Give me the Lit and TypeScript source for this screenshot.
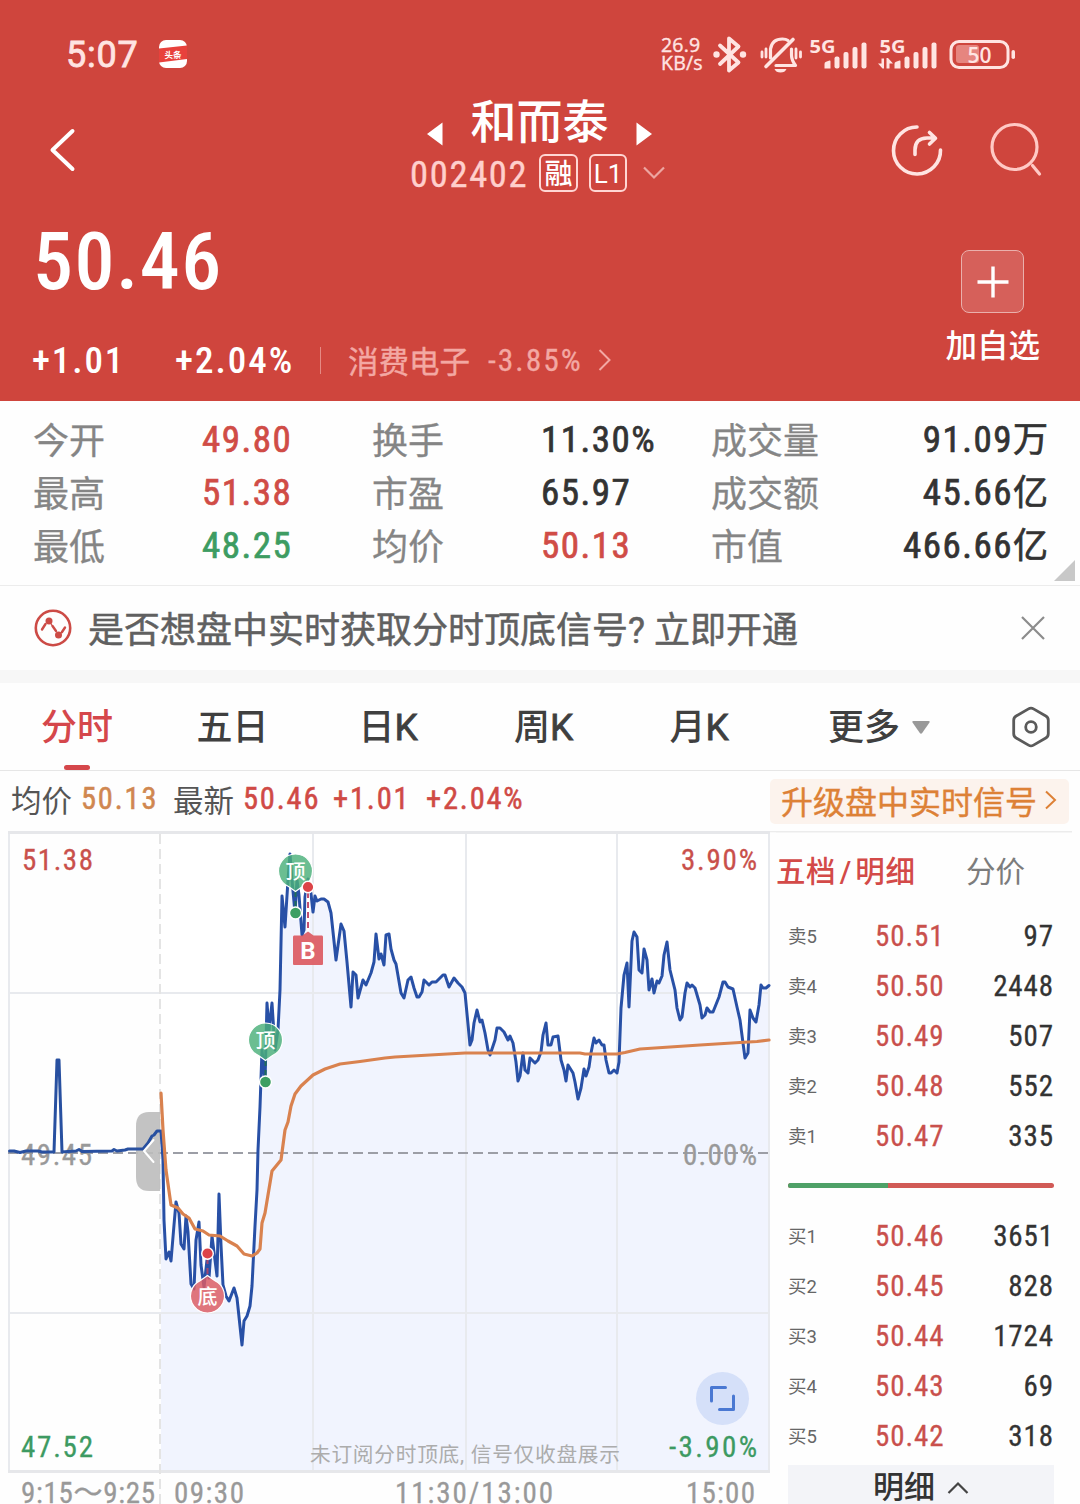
import { LitElement, html, svg, css } from "lit";
import { customElement, property } from "lit/decorators.js";

type Point = [number, number];

const CALL_AUCTION: Point[] = [
  [9.5, 1151], [14, 1151], [20, 1152.5], [26, 1151], [38, 1151], [42, 1152], [54, 1152], [57, 1060], [59, 1060], [62, 1152],
  [68, 1151.5], [76, 1151], [79, 1149.5], [82, 1151.5], [112, 1151], [114, 1149.5], [117, 1151], [125, 1150], [128, 1149],
  [143, 1149], [148, 1143], [152, 1136], [154, 1135], [157, 1131], [160, 1131],
];

const PRICE: Point[] = [
  [161, 1131], [163, 1160], [164, 1220], [166, 1259], [169, 1252], [171, 1261], [174, 1225], [176, 1202], [179, 1213],
  [181, 1244], [184, 1249], [186, 1216], [188, 1232], [191, 1284], [194, 1289], [196, 1240], [199, 1222], [201, 1265],
  [204, 1287], [207, 1260], [209, 1278], [212, 1236], [217, 1276], [219, 1194], [221, 1245], [223, 1285], [226, 1296],
  [229, 1301], [234, 1288], [237, 1298], [242, 1345], [244, 1321], [247, 1316], [250, 1306], [252, 1286], [255, 1226],
  [257, 1190], [258, 1150], [260, 1107], [262, 1050], [265, 1082], [267, 1003], [269, 1030], [272, 1003], [275, 1050],
  [278, 1030], [280, 990], [282, 896], [285, 927], [288, 880], [290, 854], [292, 880], [295, 913], [297, 880], [299, 895],
  [302, 935], [304, 930], [305, 897], [308, 879], [311, 894], [313, 912], [315, 896], [317, 901], [321, 899], [324, 899],
  [328, 902], [331, 913], [336, 960], [341, 924], [344, 931], [347, 962], [351, 1007], [353, 972], [356, 975], [358, 998],
  [363, 980], [366, 985], [371, 973], [374, 962], [376, 934], [379, 959], [381, 954], [384, 965], [386, 935], [389, 934],
  [391, 949], [394, 960], [396, 964], [401, 993], [404, 998], [408, 980], [411, 977], [414, 988], [417, 997], [419, 997],
  [422, 992], [424, 980], [429, 985], [432, 982], [436, 982], [440, 978], [443, 975], [445, 975], [449, 987], [454, 978],
  [458, 983], [462, 987], [465, 993], [470, 1045], [472, 1040], [474, 1023], [477, 1010], [480, 1022], [482, 1020],
  [485, 1033], [488, 1050], [490, 1055], [493, 1046], [495, 1040], [497, 1028], [500, 1028], [504, 1032], [508, 1040],
  [510, 1036], [513, 1043], [516, 1062], [518, 1081], [520, 1076], [523, 1053], [525, 1070], [528, 1073], [530, 1058],
  [535, 1063], [538, 1060], [541, 1052], [543, 1035], [546, 1023], [548, 1045], [551, 1045], [553, 1037], [558, 1036],
  [561, 1060], [564, 1070], [566, 1081], [568, 1065], [573, 1073], [575, 1082], [578, 1099], [581, 1088], [584, 1069],
  [586, 1076], [589, 1067], [591, 1053], [594, 1038], [596, 1043], [599, 1040], [602, 1045], [604, 1045], [606, 1060],
  [609, 1073], [611, 1073], [614, 1070], [617, 1073], [619, 1062], [621, 1008], [624, 975], [627, 963], [629, 1007],
  [632, 941], [634, 932], [637, 937], [639, 970], [642, 973], [644, 949], [647, 960], [649, 990], [652, 979], [654, 993],
  [657, 981], [659, 983], [662, 976], [664, 955], [667, 942], [670, 970], [675, 990], [677, 1008], [680, 1020],
  [682, 1017], [685, 993], [687, 983], [690, 987], [692, 985], [695, 988], [700, 1005], [702, 1018], [705, 1015],
  [707, 1008], [710, 1012], [713, 1012], [719, 997], [723, 982], [725, 982], [728, 987], [733, 989], [737, 1007],
  [740, 1020], [743, 1043], [745, 1058], [748, 1053], [750, 1010], [753, 1018], [756, 1022], [759, 1005], [761, 985],
  [763, 988], [766, 988], [769, 985.5],
];

const AVERAGE: Point[] = [
  [161, 1093], [163, 1130], [166, 1170], [171, 1205], [178, 1208], [183, 1214], [189, 1218], [195, 1229], [203, 1231],
  [209, 1235], [220, 1236], [228, 1241], [237, 1246], [244, 1254], [252, 1256], [257, 1253], [260, 1249], [262, 1223],
  [265, 1213], [272, 1171], [281, 1160], [285, 1130], [288, 1122], [291, 1106], [295, 1094], [301, 1086], [313, 1075],
  [325, 1069], [340, 1064], [360, 1061.5], [385, 1058], [395, 1057], [430, 1055], [465, 1053], [580, 1053], [585, 1054],
  [617, 1054], [625, 1052.5], [640, 1049], [670, 1047], [700, 1045], [740, 1042.5], [757, 1041.5], [769, 1040],
];

const join = (points: Point[]) => points.map((p) => p.join(",")).join(" ");

const FONT = css`
  :host {
    font-family: Roboto, "Noto Sans CJK SC", sans-serif;
    font-weight: 500;
  }
  svg {
    display: block;
    flex: none;
  }
`;

const signalBars = svg`
  <path d="M0 26 v-4.500 q0 -1.600 1.600 -2.200 l3.400 -1.200 q1 -.3 1 .8 V26z"/>
  <rect x="10" y="14" width="5" height="12" rx="2"/>
  <rect x="19" y="9.500" width="5" height="16.500" rx="2"/>
  <rect x="28" y="4.500" width="5" height="21.500" rx="2"/>
  <rect x="37" y="0" width="5" height="26" rx="2"/>`;

@customElement("status-bar")
class StatusBar extends LitElement {
  static styles = [
    FONT,
    css`
      :host {
        display: flex;
        align-items: center;
        height: 78px;
        padding: 29px 13px 0 66px;
        box-sizing: border-box;
        color: #ffe4e2;
      }
      .time {
        font-size: 36px;
        line-height: 50px;
        letter-spacing: 0.8px;
        font-weight: 400;
        -webkit-text-stroke: 0.8px #ffe4e2;
        width: 93px;
        padding-top: 2px;
      }
      .grow {
        flex: 1;
      }
      .speed {
        font: 500 19.500px/18px "Open Sans", "Noto Sans", sans-serif;
        -webkit-text-stroke: 0.4px #ffe4e2;
        width: 51px;
        letter-spacing: 0.2px;
      }
      .icons {
        display: flex;
        align-items: center;
      }
    `,
  ];

  render() {
    const c = "#ffe4e2";
    return html`
      <span class="time">5:07</span>
      <svg width="28" height="28" viewBox="0 0 28 28">
        <rect width="28" height="28" rx="7" fill="#fff" />
        <path d="M0 8.500 L28 5.500 V19 L0 22.500z" fill="#e8413c" />
        <text x="14" y="17.500" font-size="8.500" font-weight="700" fill="#fff" text-anchor="middle">头条</text>
      </svg>
      <span class="grow"></span>
      <div class="icons">
        <span class="speed">26.9<br />KB/s</span>
        <svg width="355" height="40" viewBox="712 33 355 40">
          <g fill="none" stroke="${c}" stroke-width="3.800" stroke-linejoin="round" stroke-linecap="round">
            <path d="M720 44.500 L738.500 61.500 L729 69.500 V37.500 L738.500 45.500 L720 63" />
          </g>
          <circle cx="716.500" cy="53.500" r="3.200" fill="${c}" />
          <circle cx="743" cy="53.500" r="3.200" fill="${c}" />
          <g fill="none" stroke="${c}" stroke-width="3.200" stroke-linecap="round" stroke-linejoin="round">
            <path d="M770.500 57 V48 q1.500 -10 12 -10 q3.500 0 5.500 1.500" />
            <path d="M793 38.500 L766 65.500" stroke-width="3.600" />
            <path d="M791.500 48 V54 q0 5 4 10.500 H776" />
            <path d="M762 51 v5 M766 48 v8 M800.500 51 v5 M796 48 v9" stroke-width="2.800" />
          </g>
          <path d="M774.500 68 h12 q-1.500 3.500 -6 3.500 q-4.500 0 -6 -3.500z" fill="${c}" />
          <g font-family="Open Sans, sans-serif" font-size="18.500" font-weight="700" fill="${c}">
            <text x="809.500" y="51.500" textLength="26" lengthAdjust="spacingAndGlyphs">5G</text>
            <text x="879.500" y="51.500" textLength="26" lengthAdjust="spacingAndGlyphs">5G</text>
          </g>
          <g fill="${c}" transform="translate(824.500 41.500)">${signalBars}</g>
          <g fill="${c}" transform="translate(894.500 41.500)">${signalBars}</g>
          <path d="M878 62.500 h3.500 v-5 h2.500 v10 h-1.500z M886.500 57 h1.500 l5 5.500 h-3.500 v5 h-3z" fill="${c}" />
          <rect x="951" y="40.500" width="57" height="26" rx="8" fill="none" stroke="${c}" stroke-width="3" />
          <rect x="956" y="44" width="23" height="18" rx="3" fill="#e6857f" />
          <rect x="1011.500" y="49" width="3.500" height="9" rx="1.750" fill="${c}" />
          <text x="979.500" y="62" font-size="21" font-weight="600" text-anchor="middle" fill="${c}" font-family="Open Sans, sans-serif">50</text>
        </svg>
      </div>
    `;
  }
}

@customElement("quote-header")
class QuoteHeader extends LitElement {
  static styles = [
    FONT,
    css`
      :host {
        display: block;
        height: 323px;
        color: #fff;
      }
      .nav {
        display: flex;
        height: 132px;
      }
      .back {
        margin: 50px 0 0 49px;
      }
      .title {
        width: 262px;
        margin-left: 333px;
      }
      .name-row {
        display: flex;
        align-items: center;
        justify-content: space-between;
        width: 225px;
        margin-left: 17px;
        height: 84px;
      }
      .name-row svg {
        margin-top: 28px;
      }
      .name {
        font-size: 46px;
        line-height: 60px;
        padding-top: 4px;
      }
      .code-row {
        display: flex;
        align-items: center;
        height: 38px;
        margin-top: -8px;
        color: #ffcfcc;
      }
      .code {
        font-size: 36.500px;
        font-weight: 400;
        font-stretch: 85%;
        width: 129px;
        padding-top: 2px;
        letter-spacing: 1.7px;
        -webkit-text-stroke: 0.4px #ffcfcc;
      }
      .tag {
        box-sizing: border-box;
        height: 38px;
        width: 39px;
        border: 2px solid #ffd6d3;
        border-radius: 6px;
        color: #fff;
        font-size: 28px;
        line-height: 38px;
        text-align: center;
        margin-right: 11px;
      }
      .level {
        width: 38px;
        font-size: 26px;
        font-weight: 400;
        line-height: 36px;
        margin-right: 16px;
      }
      .share {
        margin: 45px 0 0 218px;
      }
      .search {
        margin: 43px 0 0 44px;
      }
      .body {
        display: flex;
        justify-content: space-between;
      }
      .price {
        font-size: 80px;
        line-height: 100px;
        padding: 2px 0 0 33px;
        font-stretch: 85%;
        letter-spacing: 1.5px;
      }
      .change-row {
        display: flex;
        align-items: center;
        height: 50px;
        margin: 23px 0 0 32px;
        font-size: 37px;
        font-stretch: 85%;
      }
      .delta {
        width: 143px;
        letter-spacing: 1.9px;
      }
      .pct {
        width: 145px;
        letter-spacing: 2px;
      }
      .rule {
        width: 1px;
        height: 27px;
        background: #e58a84;
        margin-right: 27px;
      }
      .sector {
        font-size: 30.500px;
        font-weight: 400;
        color: #f3a8a3;
        width: 140px;
        white-space: nowrap;
        -webkit-text-stroke: 0.4px #f3a8a3;
      }
      .sector-pct {
        font-size: 31.500px;
        font-weight: 400;
        color: #f3a8a3;
        width: 110px;
        letter-spacing: 2px;
        -webkit-text-stroke: 0.3px #f3a8a3;
      }
      .watch {
        display: flex;
        flex-direction: column;
        align-items: center;
        padding: 40px 40px 0 0;
        font-size: 31.500px;
        line-height: 40px;
      }
      .plus {
        box-sizing: border-box;
        width: 63px;
        height: 63px;
        border: 1.500px solid #eab0ac;
        border-radius: 8px;
        background: #d6605a;
        margin-bottom: 14px;
        display: flex;
        align-items: center;
        justify-content: center;
      }
    `,
  ];

  render() {
    return html`
      <div class="nav">
        <svg class="back" width="28" height="44" viewBox="0 0 28 44">
          <path d="M23.500 3 L3.500 22 L23.500 41" fill="none" stroke="#fff" stroke-width="4" stroke-linecap="round" stroke-linejoin="round" />
        </svg>
        <div class="title">
          <div class="name-row">
            <svg width="16" height="24" viewBox="0 0 16 24"><path d="M15.500 .5 V23.500 L0 12z" fill="#fff" /></svg>
            <span class="name">和而泰</span>
            <svg width="16" height="24" viewBox="0 0 16 24"><path d="M.5 .5 V23.500 L16 12z" fill="#fff" /></svg>
          </div>
          <div class="code-row">
            <span class="code">002402</span>
            <span class="tag">融</span>
            <span class="tag level">L1</span>
            <svg width="22" height="14" viewBox="0 0 22 14">
              <path d="M1 1.500 L11 11.500 L21 1.500" fill="none" stroke="#eda6a1" stroke-width="2.200" />
            </svg>
          </div>
        </div>
        <svg class="share" width="54" height="54" viewBox="0 0 54 54">
          <g fill="none" stroke="#ffe4e2" stroke-width="3.600" stroke-linecap="round" stroke-linejoin="round">
            <path d="M27 4 A23.500 23.500 0 1 0 50.500 27" />
            <path d="M25 31.500 V27 Q25 15 37 15 H45 M39.500 9.500 L45.500 15.300 L39.500 21" />
          </g>
        </svg>
        <svg class="search" width="54" height="56" viewBox="0 0 54 56">
          <g fill="none" stroke="#ffc9c5" stroke-width="3.200" stroke-linecap="round">
            <circle cx="26.500" cy="26" r="22.500" />
            <path d="M44.500 44.500 L51.500 53" />
          </g>
        </svg>
      </div>
      <div class="body">
        <div>
          <div class="price">50.46</div>
          <div class="change-row">
            <span class="delta">+1.01</span>
            <span class="pct">+2.04%</span>
            <span class="rule"></span>
            <span class="sector">消费电子</span>
            <span class="sector-pct">-3.85%</span>
            <svg width="14" height="22" viewBox="0 0 14 22">
              <path d="M1.500 1 L11.500 11 L1.500 21" fill="none" stroke="#f3a8a3" stroke-width="2" />
            </svg>
          </div>
        </div>
        <div class="watch">
          <span class="plus">
            <svg width="32" height="32" viewBox="0 0 32 32"><path d="M0.500 16 H31.500 M16 0.500 V31.500" stroke="#fff" stroke-width="3.400" /></svg>
          </span>
          加自选
        </div>
      </div>
    `;
  }
}

@customElement("quote-stats")
class QuoteStats extends LitElement {
  static styles = [
    FONT,
    css`
      :host {
        display: flex;
        box-sizing: border-box;
        height: 185px;
        padding: 12px 0 0 33px;
        border-bottom: 1.500px solid #ececec;
      }
      .grid {
        display: grid;
        grid-template-columns: 169px 170px 169px 170px 337px;
        grid-auto-rows: 53px;
        line-height: 53px;
        font-size: 36px;
        color: #333;
      }
      .label {
        color: #858585;
        font-weight: 400;
        padding-top: 3px;
        -webkit-text-stroke: 0.3px currentColor;
      }
      .value {
        font-size: 37px;
        font-weight: 400;
        font-stretch: 85%;
        letter-spacing: 1.5px;
        -webkit-text-stroke: 0.7px currentColor;
      }
      .unit {
        font-size: 35px;
        letter-spacing: 0;
      }
      .last {
        display: flex;
        justify-content: space-between;
      }
      .up {
        color: #d04c46;
      }
      .down {
        color: #3d9c62;
      }
      .corner {
        align-self: flex-end;
        margin: 0 0 4px 6px;
      }
    `,
  ];

  private rows = [
    ["今开", "49.80", "up", "换手", "11.30%", "", "成交量", "91.09", "万"],
    ["最高", "51.38", "up", "市盈", "65.97", "", "成交额", "45.66", "亿"],
    ["最低", "48.25", "down", "均价", "50.13", "up", "市值", "466.66", "亿"],
  ];

  render() {
    return html`
      <div class="grid">
        ${this.rows.map(
          (r) => html`
            <span class="label">${r[0]}</span><span class="value ${r[2]}">${r[1]}</span>
            <span class="label">${r[3]}</span><span class="value ${r[5]}">${r[4]}</span>
            <span class="last"
              ><span class="label">${r[6]}</span><span class="value">${r[7]}<span class="unit">${r[8]}</span></span></span
            >
          `
        )}
      </div>
      <svg class="corner" width="21" height="22" viewBox="0 0 21 22"><path d="M21 1 V22 H0z" fill="#c8c8c8" /></svg>
    `;
  }
}

@customElement("signal-notice")
class SignalNotice extends LitElement {
  static styles = [
    FONT,
    css`
      :host {
        display: flex;
        align-items: center;
        box-sizing: border-box;
        height: 97px;
        padding: 0 34px;
        border-bottom: 13px solid #f7f7f7;
        color: #606060;
      }
      .text {
        flex: 1;
        margin-left: 16px;
        padding-bottom: 2px;
        font-size: 36px;
        font-weight: 400;
        white-space: nowrap;
        -webkit-text-stroke: 0.5px #606060;
      }
    `,
  ];

  render() {
    return html`
      <svg width="38" height="38" viewBox="0 0 38 38">
        <circle cx="19" cy="19" r="17.200" fill="none" stroke="#cc4b46" stroke-width="2.600" />
        <path d="M8 20.500 L11.500 15 M18.500 17 L22 22 M28 23 L31 18.500" fill="none" stroke="#cc4b46" stroke-width="2.400" stroke-linecap="round" />
        <circle cx="15" cy="12" r="3.500" fill="#cc4b46" />
        <path d="M15 12 L18.500 17 M24.500 26 L28 23" stroke="#cc4b46" stroke-width="1.200" />
        <circle cx="24.500" cy="26" r="3.500" fill="#cc4b46" />
      </svg>
      <span class="text">是否想盘中实时获取分时顶底信号? 立即开通</span>
      <svg width="26" height="26" viewBox="0 0 26 26">
        <path d="M2 2 L24 24 M24 2 L2 24" stroke="#8c8c8c" stroke-width="2.200" />
      </svg>
    `;
  }
}

@customElement("period-tabs")
class PeriodTabs extends LitElement {
  static styles = [
    FONT,
    css`
      :host {
        display: flex;
        box-sizing: border-box;
        height: 88px;
        padding-left: 41px;
        border-bottom: 1.500px solid #e6e6e6;
        font-size: 36px;
        line-height: 90px;
        color: #3f3f3f;
      }
      .tab {
        width: 155.500px;
        white-space: nowrap;
      }
      .wide {
        width: 162px;
      }
      .k {
        font-size: 37px;
        font-weight: 400;
        -webkit-text-stroke: 0.8px currentColor;
      }
      .active {
        position: relative;
        color: #d5474b;
      }
      .active::after {
        content: "";
        position: absolute;
        left: 23px;
        bottom: 0;
        width: 26px;
        height: 5px;
        border-radius: 3px;
        background: #d5474b;
      }
      .more {
        display: flex;
        align-items: center;
        margin-left: 3px;
        padding-top: 2px;
        gap: 12px;
        width: 182.500px;
        white-space: nowrap;
      }
      .gear {
        margin-top: 22.500px;
      }
    `,
  ];

  render() {
    return html`
      <span class="tab active">分时</span>
      <span class="tab wide">五日</span>
      <span class="tab">日<span class="k">K</span></span>
      <span class="tab">周<span class="k">K</span></span>
      <span class="tab">月<span class="k">K</span></span>
      <span class="more">更多
        <svg width="18" height="13" viewBox="0 0 18 13"><path d="M1.500 0 H16.500 Q18.500 0 17.300 1.800 L10.200 12 Q9 13.300 7.800 12 L.7 1.800 Q-.5 0 1.500 0z" fill="#999" /></svg>
      </span>
      <svg class="gear" width="40" height="42" viewBox="0 0 40 42">
        <path d="M17.500 2.900 Q20 1.400 22.500 2.900 L34.800 10 Q37.300 11.500 37.300 14.300 V27.700 Q37.300 30.500 34.800 32 L22.500 39.100 Q20 40.600 17.500 39.100 L5.200 32 Q2.700 30.500 2.700 27.700 V14.300 Q2.700 11.500 5.200 10z" fill="none" stroke="#5a5a5a" stroke-width="2.800" />
        <circle cx="20" cy="21" r="5.300" fill="none" stroke="#5a5a5a" stroke-width="2.800" />
      </svg>
    `;
  }
}

@customElement("chart-legend")
class ChartLegend extends LitElement {
  static styles = [
    FONT,
    css`
      :host {
        display: flex;
        align-items: center;
        box-sizing: border-box;
        height: 60px;
        padding: 0 11px 5px;
        font-size: 30.500px;
        color: #d04a45;
        white-space: nowrap;
      }
      .num {
        font-weight: 400;
        font-stretch: 85%;
        letter-spacing: 1.8px;
        -webkit-text-stroke: 0.5px currentColor;
      }
      .label {
        color: #555;
        font-weight: 400;
        width: 61px;
      }
      .avg {
        color: #d08750;
        width: 92px;
        margin-left: 9px;
      }
      .now {
        width: 90px;
        margin-left: 9px;
      }
      .delta {
        width: 93px;
      }
      .upgrade {
        margin: 5px 0 0 auto;
        box-sizing: border-box;
        width: 299px;
        height: 45px;
        padding: 0 12px 3px 11px;
        border-radius: 5px;
        background: #fcf3ed;
        color: #dd8136;
        font-size: 32px;
        font-weight: 400;
        -webkit-text-stroke: 0.4px currentColor;
        display: flex;
        align-items: center;
        justify-content: space-between;
      }
    `,
  ];

  render() {
    return html`
      <span class="label">均价</span><span class="num avg">50.13</span> <span class="label">最新</span
      ><span class="num now">50.46</span><span class="num delta">+1.01</span><span class="num">+2.04%</span>
      <span class="upgrade">升级盘中实时信号
        <svg width="12" height="20" viewBox="0 0 12 20">
          <path d="M1 1.500 L10 10 L1 18.500" fill="none" stroke="#dd8136" stroke-width="2" />
        </svg>
      </span>
    `;
  }
}

@customElement("minute-chart")
class MinuteChart extends LitElement {
  static styles = [
    FONT,
    css`
      :host {
        display: block;
        width: 776px;
        height: 673px;
      }
      .num {
        font-size: 29px;
        font-weight: 400;
        font-stretch: 85%;
        stroke-width: 0.3px;
      }
      .up {
        fill: #c9504b;
        stroke: #c9504b;
      }
      .down {
        fill: #3d9a62;
        stroke: #3d9a62;
      }
      .dim {
        fill: #999;
        stroke: #999;
      }
      .note {
        font-size: 20.700px;
        font-weight: 400;
        fill: #acacac;
      }
      .grid {
        stroke: #e8eaee;
        stroke-width: 2;
      }
      .mark {
        font-size: 20px;
        fill: #fff;
        text-anchor: middle;
      }
    `,
  ];

  private topMark(x: number, y: number, dotY: number) {
    return svg`
      <path d="M${x} ${y + 20} V${dotY}" stroke="#1f6d5a" stroke-width="2" stroke-dasharray="6 4"/>
      <path d="M${x} ${y + 20.500} L${x - 7} ${y + 15.500} A17 17 0 1 1 ${x + 7} ${y + 15.500}z" fill="#4bb07a" fill-opacity=".82" stroke="#fff" stroke-width="1.200"/>
      <text class="mark" x="${x}" y="${y + 7.500}">顶</text>
      <circle cx="${x}" cy="${dotY}" r="6" fill="#3d9f63" stroke="#fff" stroke-width="1.400"/>`;
  }

  render() {
    return html`
      <svg width="776" height="673" viewBox="0 831 776 673">
        <rect x="161" y="834" width="608" height="637" fill="#fff" />
        <polygon points="161,1471 ${join(PRICE)} 770,1471" fill="#f1f4fe" />
        <path class="grid" d="M9 833 V1472 M769 833 V1472 M313 834 V1473 M466 834 V1473 M617 834 V1473 M9 993 H769 M9 1313 H769" />
        <path d="M8 832.500 H770 M8 1471.500 H770" stroke="#e6e7ea" stroke-width="3" />
        <path d="M770 831.500 H1072" stroke="#ececec" stroke-width="1.500" />
        <path d="M160 834 V1504" stroke="#e4e4e4" stroke-width="2" stroke-dasharray="10 5" />
        <path d="M8 1153 H769" stroke="#9c9ea6" stroke-width="2" stroke-dasharray="10 5" />
        <g class="num">
          <text class="up" x="22" y="870" textLength="71">51.38</text>
          <text class="up" x="681" y="870" textLength="76">3.90%</text>
          <text class="dim" x="21" y="1165" textLength="71">49.45</text>
          <text class="dim" x="683" y="1165" textLength="74">0.00%</text>
          <text class="down" x="21" y="1457" textLength="72">47.52</text>
          <text class="down" x="669" y="1457" textLength="88">-3.90%</text>
          <text class="dim" x="21" y="1503" textLength="134">9:15～9:25</text>
          <text class="dim" x="174" y="1503" textLength="70">09:30</text>
          <text class="dim" x="395" y="1503" textLength="158">11:30/13:00</text>
          <text class="dim" x="686" y="1503" textLength="69">15:00</text>
        </g>
        <text class="note" x="310" y="1461.500" textLength="310">未订阅分时顶底, 信号仅收盘展示</text>
        <path d="M160 1112 V1191 H149 Q136 1191 136 1177 V1126 Q136 1112 149 1112z" fill="#bdbdbd" fill-opacity=".9" />
        <g fill="none" stroke-linejoin="round" stroke-linecap="round" stroke-width="3">
          <polyline points="${join(CALL_AUCTION)}" stroke="#2850a0" />
          <polyline points="${join(PRICE)}" stroke="#2850a6" />
          <polyline points="${join(AVERAGE)}" stroke="#d9824f" stroke-width="3.200" />
          <path d="M153.500 1140 L144 1151 L153.500 1162" stroke="#fff" stroke-width="2" />
        </g>
        ${this.topMark(295.5, 871, 913)} ${this.topMark(265.5, 1040, 1082)}
        <path d="M308 892 V932" stroke="#fff" stroke-width="3" />
        <path d="M308 892 V932" stroke="#c5506e" stroke-width="2" stroke-dasharray="6 4" />
        <path d="M294 935.500 H302.500 L308 931.500 L313.500 935.500 H322 Q323 935.500 323 937 V964 Q323 965 322 965 H294 Q293 965 293 964 V937 Q293 935.500 294 935.500z" fill="#dc5a62" fill-opacity=".92" />
        <text x="308" y="959" font-size="24" font-weight="700" fill="#fff" text-anchor="middle">B</text>
        <circle cx="308" cy="887" r="5.800" fill="#dc4448" stroke="#fff" stroke-width="1.400" />
        <path d="M207.500 1258 V1276" stroke="#a04470" stroke-width="2" stroke-dasharray="6 4" />
        <path d="M207.500 1275.500 L214.500 1280.500 A17 17 0 1 1 200.500 1280.500z" fill="#db5c64" fill-opacity=".84" stroke="#fff" stroke-width="1.200" />
        <text class="mark" x="207.500" y="1303.500">底</text>
        <circle cx="207.500" cy="1253.500" r="5.800" fill="#dc4448" stroke="#fff" stroke-width="1.400" />
        <circle cx="722.500" cy="1398.500" r="26.500" fill="#d5e0f9" />
        <path d="M711.500 1401 V1387.500 H725.500 M733.500 1396 V1409.500 H719.500" fill="none" stroke="#4a78d2" stroke-width="3" stroke-linecap="round" stroke-linejoin="round" />
      </svg>
    `;
  }
}

@customElement("order-book")
class OrderBook extends LitElement {
  @property({ type: Number }) sellShare = 37.5;

  static styles = [
    FONT,
    css`
      :host {
        display: block;
        flex: 1;
        box-sizing: border-box;
        height: 673px;
        padding-right: 26px;
        background: linear-gradient(#ececec, #ececec) no-repeat 0 0 / 296px 1.500px;
      }
      .tabs {
        display: flex;
        height: 80px;
        line-height: 83px;
        font-size: 29.500px;
        color: #7c7c7c;
        font-weight: 400;
        white-space: nowrap;
      }
      .active {
        width: 190px;
        color: #d34a48;
        font-weight: 500;
        letter-spacing: 0.6px;
      }
      .slash {
        margin: 0 3.500px;
      }
      .row {
        display: grid;
        grid-template-columns: 87px 1fr auto;
        height: 50px;
        line-height: 51px;
        padding-left: 12px;
        font-size: 29px;
        font-weight: 400;
        color: #333;
      }
      .level {
        font-size: 18.500px;
        color: #666;
        padding-top: 1px;
      }
      .price {
        color: #c9504c;
      }
      .price,
      .volume {
        font-stretch: 85%;
        letter-spacing: 0.9px;
        -webkit-text-stroke: 0.3px currentColor;
      }
      .ratio {
        display: flex;
        height: 5px;
        margin: 22px 0 23px 12px;
        border-radius: 3px;
        overflow: hidden;
        background: #d15a56;
      }
      .sell {
        background: #4ea167;
      }
      .detail {
        display: flex;
        align-items: center;
        justify-content: center;
        box-sizing: border-box;
        gap: 12px;
        height: 39px;
        padding-top: 6px;
        margin: 4px 0 0 12px;
        background: #f3f4f8;
        font-size: 31px;
        line-height: 38px;
        color: #333;
      }
    `,
  ];

  private sells = [
    ["卖5", "50.51", "97"],
    ["卖4", "50.50", "2448"],
    ["卖3", "50.49", "507"],
    ["卖2", "50.48", "552"],
    ["卖1", "50.47", "335"],
  ];

  private buys = [
    ["买1", "50.46", "3651"],
    ["买2", "50.45", "828"],
    ["买3", "50.44", "1724"],
    ["买4", "50.43", "69"],
    ["买5", "50.42", "318"],
  ];

  private row(r: string[]) {
    return html`<div class="row">
      <span class="level">${r[0]}</span><span class="price">${r[1]}</span><span class="volume">${r[2]}</span>
    </div>`;
  }

  render() {
    return html`
      <div class="tabs"><span class="active">五档<span class="slash">/</span>明细</span><span>分价</span></div>
      ${this.sells.map((r) => this.row(r))}
      <div class="ratio"><span class="sell" style="width:${this.sellShare}%"></span></div>
      ${this.buys.map((r) => this.row(r))}
      <div class="detail">
        明细
        <svg width="22" height="14" viewBox="0 0 22 14">
          <path d="M1.500 12 L11 2.500 L20.500 12" fill="none" stroke="#444" stroke-width="2.200" />
        </svg>
      </div>
    `;
  }
}

@customElement("app-root")
class AppRoot extends LitElement {
  static styles = css`
    :host {
      display: block;
      width: 1080px;
      height: 1504px;
      overflow: hidden;
      background: #fefefe;
    }
    .top {
      background: #cf453d;
    }
    .market {
      display: flex;
    }
  `;

  render() {
    return html`
      <div class="top">
        <status-bar></status-bar>
        <quote-header></quote-header>
      </div>
      <quote-stats></quote-stats>
      <signal-notice></signal-notice>
      <period-tabs></period-tabs>
      <chart-legend></chart-legend>
      <div class="market">
        <minute-chart></minute-chart>
        <order-book></order-book>
      </div>
    `;
  }
}
